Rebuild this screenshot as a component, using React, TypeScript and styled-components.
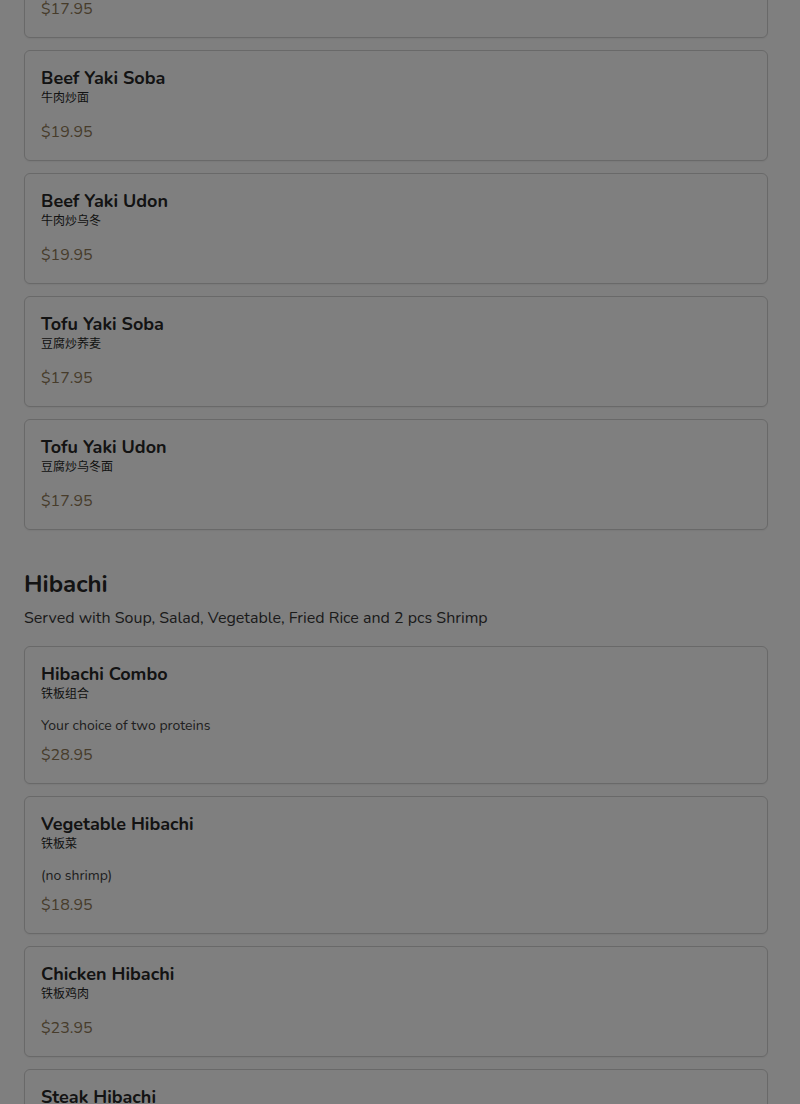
import { useLayoutEffect, useRef } from 'react';
import styled, { createGlobalStyle } from 'styled-components';

type Item = {
    name: string;
    native: string;
    note?: string;
    price: string;
};

type Section = {
    title: string;
    description?: string;
    items: Item[];
};

const menu: Section[] = [
    {
        title: 'Yaki Soba & Udon',
        description: 'Stir-fried noodles with vegetables',
        items: [
            { name: 'Chicken Yaki Soba', native: '鸡肉炒面', price: '$17.95' },
            { name: 'Chicken Yaki Udon', native: '鸡肉炒乌冬', price: '$17.95' },
            { name: 'Beef Yaki Soba', native: '牛肉炒面', price: '$19.95' },
            { name: 'Beef Yaki Udon', native: '牛肉炒乌冬', price: '$19.95' },
            { name: 'Tofu Yaki Soba', native: '豆腐炒荞麦', price: '$17.95' },
            { name: 'Tofu Yaki Udon', native: '豆腐炒乌冬面', price: '$17.95' },
        ],
    },
    {
        title: 'Hibachi',
        description: 'Served with Soup, Salad, Vegetable, Fried Rice and 2 pcs Shrimp',
        items: [
            { name: 'Hibachi Combo', native: '铁板组合', note: 'Your choice of two proteins', price: '$28.95' },
            { name: 'Vegetable Hibachi', native: '铁板菜', note: '(no shrimp)', price: '$18.95' },
            { name: 'Chicken Hibachi', native: '铁板鸡肉', price: '$23.95' },
            { name: 'Steak Hibachi', native: '铁板牛排', price: '$28.95' },
            { name: 'Shrimp Hibachi', native: '铁板大虾', price: '$26.95' },
        ],
    },
];

const App = () => {
    const anchor = useRef<HTMLDivElement>(null);

    // page is shown scrolled, with the "Beef Yaki Soba" card 50px from the top
    useLayoutEffect(() => {
        const el = anchor.current;
        if (!el) return;
        const top = el.getBoundingClientRect().top + window.scrollY - 50;
        window.scrollTo(0, top);
    }, []);

    return (
        <>
            <GlobalStyle />
            <Page>
                {menu.map(section => (
                    <SectionBlock key={section.title}>
                        <SectionTitle>{section.title}</SectionTitle>
                        {section.description && (
                            <SectionDescription>{section.description}</SectionDescription>
                        )}
                        <ItemList>
                            {section.items.map(item => (
                                <Card
                                    key={item.name}
                                    ref={item.name === 'Beef Yaki Soba' ? anchor : undefined}
                                >
                                    <ItemName>{item.name}</ItemName>
                                    <NativeName lang="zh">{item.native}</NativeName>
                                    <CardBody>
                                        {item.note && <Note>{item.note}</Note>}
                                        <Price>{item.price}</Price>
                                    </CardBody>
                                </Card>
                            ))}
                        </ItemList>
                    </SectionBlock>
                ))}
            </Page>
            <Backdrop />
        </>
    );
};

export default App;

const GlobalStyle = createGlobalStyle`
    html, body {
        margin: 0;
        padding: 0;
        background: #ffffff;
    }
    body {
        font-family: Nunito, Lato, 'Noto Sans CJK SC', sans-serif;
        color: #2b2b2b;
    }
`;

const Page = styled.main`
    padding: 24px 32px 200px 24px;
    display: flex;
    flex-direction: column;
    gap: 38px;
`;

const SectionBlock = styled.section`
    display: flex;
    flex-direction: column;
`;

const SectionTitle = styled.h2`
    margin: 0 0 6px;
    font-size: 24px;
    line-height: 32px;
    font-weight: 700;
    color: #262626;
`;

const SectionDescription = styled.p`
    margin: 0 0 16px;
    font-size: 16px;
    line-height: 24px;
    color: #363636;
`;

const ItemList = styled.div`
    display: flex;
    flex-direction: column;
    gap: 12px;
`;

const Card = styled.div`
    border: 1px solid #d2d2d2;
    border-radius: 6px;
    background: #ffffff;
    padding: 16px;
    display: flex;
    flex-direction: column;
    box-shadow: 0 1px 2px rgba(0, 0, 0, 0.06);
`;

const ItemName = styled.div`
    font-size: 18px;
    line-height: 22px;
    font-weight: 700;
    color: #262626;
`;

const NativeName = styled.div`
    font-size: 12px;
    line-height: 18px;
    color: #262626;
`;

const CardBody = styled.div`
    margin-top: 13px;
    display: flex;
    flex-direction: column;
    gap: 7px;
`;

const Note = styled.div`
    font-size: 14px;
    line-height: 20px;
    color: #404040;
`;

const Price = styled.div`
    font-size: 16px;
    line-height: 24px;
    color: #8e7856;
`;

const Backdrop = styled.div`
    position: fixed;
    inset: 0;
    background: rgba(0, 0, 0, 0.5);
`;
